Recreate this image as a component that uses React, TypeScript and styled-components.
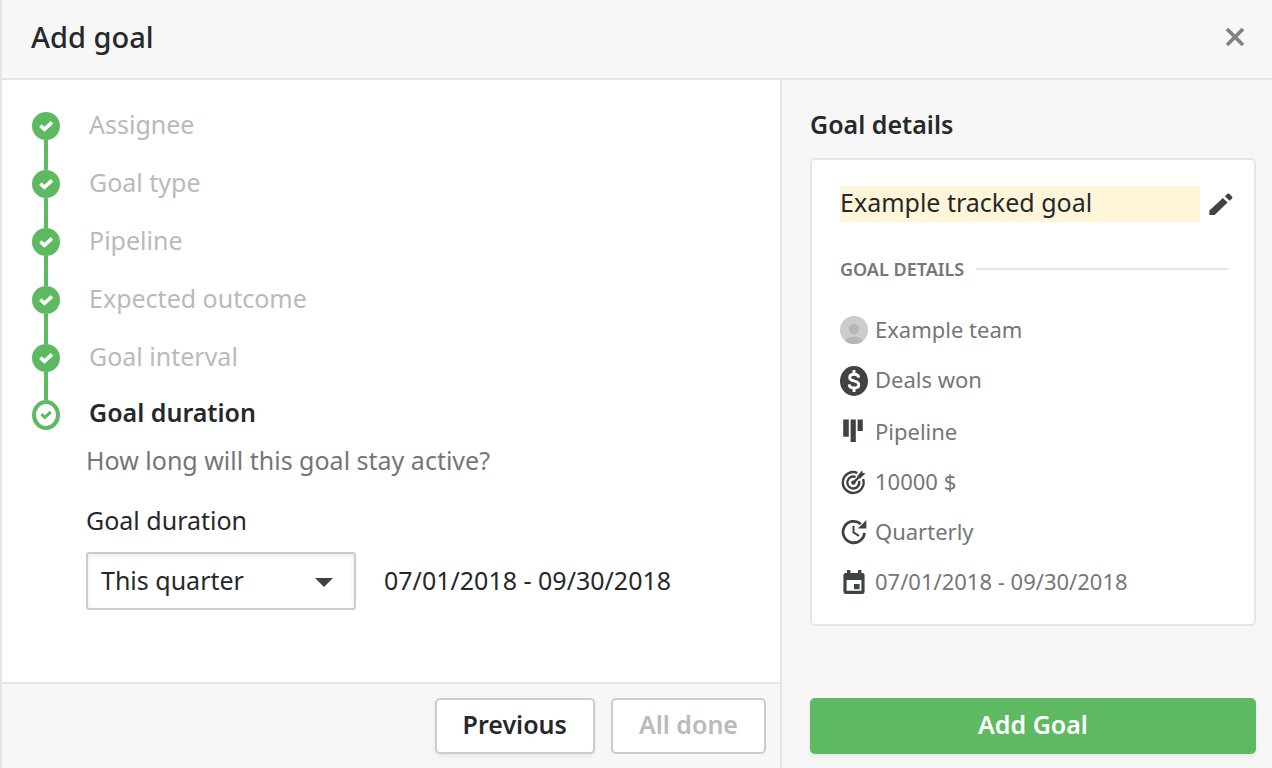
import React, { useState } from "react";
import styled, { createGlobalStyle } from "styled-components";

const color = {
  ink: "#26292c",
  icon: "#404346",
  muted: "#747678",
  faint: "#b9babb",
  green: "#5dba60",
  line: "#e5e5e5",
  control: "#cbcccd",
  panel: "#f7f7f7",
};

const GlobalStyle = createGlobalStyle`
  *, *::before, *::after { box-sizing: border-box; }
  body {
    margin: 0;
    background: #fff;
    color: ${color.ink};
    font-family: "Noto Sans", "Open Sans", sans-serif;
    font-size: 25px;
    line-height: 36px;
  }
  button, input, select { font: inherit; color: inherit; }
  h1, h2, h3, p, ol, ul { margin: 0; padding: 0; }
  svg { display: block; flex: none; }
`;

const Dialog = styled.main`
  display: flex;
  flex-direction: column;
  min-height: 100vh;
  border-left: 2px solid ${color.line};
`;

const Header = styled.header`
  display: flex;
  align-items: center;
  justify-content: space-between;
  height: 80px;
  padding: 0 20px 4px 29px;
  background: ${color.panel};
  border-bottom: 2px solid ${color.line};
`;

const Title = styled.h1`
  font-size: 29px;
  font-weight: 500;
`;

const IconButton = styled.button<{ $width: number; $outset?: number }>`
  display: flex;
  align-items: center;
  justify-content: center;
  width: ${(p) => p.$width}px;
  height: 36px;
  margin-right: -${(p) => p.$outset ?? 0}px;
  padding: 0;
  border: 0;
  background: none;
  cursor: pointer;
`;

const Body = styled.div`
  display: grid;
  grid-template-columns: minmax(0, 1fr) 492px;
  flex: 1;
`;

const Main = styled.div`
  display: flex;
  flex-direction: column;
`;

const Steps = styled.ol`
  flex: 1;
  list-style: none;
  padding: 26px 30px 24px;
`;

const Step = styled.li<{ $height?: number }>`
  display: flex;
  gap: 29px;
  height: ${(p) => (p.$height ? `${p.$height}px` : "auto")};
`;

const Rail = styled.div`
  display: flex;
  flex-direction: column;
  align-items: center;
  width: 28px;
  margin-top: 6px;
  margin-bottom: -6px;
`;

const Connector = styled.span`
  flex: 1;
  width: 4px;
  background: ${color.green};
`;

const StepLabel = styled.h2<{ $active?: boolean }>`
  font-size: 25px;
  font-weight: ${(p) => (p.$active ? 600 : 400)};
  color: ${(p) => (p.$active ? color.ink : color.faint)};
`;

const StepContent = styled.div`
  padding: 12px 0 0 54px;
`;

const Question = styled.p`
  color: ${color.muted};
`;

const FieldLabel = styled.label`
  display: block;
  margin: 24px 0 14px;
`;

const FieldRow = styled.div`
  display: flex;
  align-items: center;
  gap: 28px;
`;

const DateRange = styled.span`
  padding-bottom: 2px;
`;

const SelectBox = styled.div`
  position: relative;
  width: 270px;

  svg {
    position: absolute;
    top: 26px;
    right: 23px;
    pointer-events: none;
  }
`;

const Select = styled.select`
  appearance: none;
  width: 100%;
  height: 58px;
  padding: 0 48px 2px 13px;
  border: 2px solid ${color.control};
  border-radius: 3px;
  background: #fff;
  box-shadow: inset 0 2px 4px rgba(38, 41, 44, 0.1);
`;

const Footer = styled.footer`
  display: flex;
  justify-content: flex-end;
  gap: 16px;
  padding: 14px;
  background: ${color.panel};
  border-top: 2px solid ${color.line};
`;

const Button = styled.button<{ $primary?: boolean }>`
  height: 56px;
  padding: 0 26px 4px;
  border: 2px solid ${(p) => (p.$primary ? color.green : color.control)};
  border-radius: 5px;
  background: ${(p) => (p.$primary ? color.green : "#fff")};
  color: ${(p) => (p.$primary ? "#fff" : color.ink)};
  font-weight: 600;
  box-shadow: 0 2px 4px rgba(38, 41, 44, 0.08);
  cursor: pointer;

  &:disabled {
    color: ${color.faint};
    box-shadow: none;
    cursor: default;
  }
`;

const Aside = styled.aside`
  display: flex;
  flex-direction: column;
  padding: 26px 16px 14px 28px;
  background: ${color.panel};
  border-left: 2px solid ${color.line};
`;

const AsideTitle = styled.h2`
  font-size: 25px;
  font-weight: 600;
`;

const Card = styled.section`
  margin: 16px 0 auto;
  padding: 26px 26px 17px 28px;
  border: 2px solid ${color.line};
  border-radius: 5px;
  background: #fff;
`;

const NameRow = styled.div`
  display: flex;
`;

const NameInput = styled.input`
  flex: 1;
  min-width: 0;
  height: 36px;
  padding: 0 0 4px;
  border: 0;
  background: #fff6d9;
`;

const SectionTitle = styled.h3`
  display: flex;
  align-items: center;
  gap: 12px;
  margin: 34px 0 23px;
  font-size: 18px;
  line-height: 26px;
  font-weight: 600;
  color: ${color.muted};

  &::after {
    content: "";
    flex: 1;
    height: 2px;
    background: ${color.line};
  }
`;

const DetailList = styled.ul`
  list-style: none;
`;

const Detail = styled.li`
  display: flex;
  align-items: flex-start;
  gap: 7px;
  padding: 11px 0;
  font-size: 22px;
  line-height: 26px;
  color: ${color.muted};
`;

const DoneMark = () => (
  <svg width="28" height="28" viewBox="0 0 28 28" aria-hidden="true">
    <circle cx="14" cy="14" r="14" fill={color.green} />
    <path d="M8.4 13.6 12.4 17.4 20 10.4" fill="none" stroke="#fff" strokeWidth="3.6" />
  </svg>
);

const CurrentMark = () => (
  <svg width="28" height="30" viewBox="0 0 28 30" aria-hidden="true">
    <ellipse cx="14" cy="15" rx="12" ry="13" fill="#fff" stroke={color.green} strokeWidth="4" />
    <path d="M9.4 14.2 12.8 17.4 18.8 11.8" fill="none" stroke={color.green} strokeWidth="3" />
  </svg>
);

const CloseIcon = () => (
  <svg width="20" height="20" viewBox="0 0 20 20" aria-hidden="true">
    <path d="M2 2 18 18M18 2 2 18" stroke="#808284" strokeWidth="3.8" />
  </svg>
);

const CaretIcon = () => (
  <svg width="18" height="9" viewBox="0 0 18 9" aria-hidden="true">
    <path d="M0 0H18L9 9Z" fill={color.icon} />
  </svg>
);

const PencilIcon = () => (
  <svg width="28" height="28" viewBox="0 0 28 28" fill={color.icon} aria-hidden="true">
    <path d="M2.4 20.4 15.9 8 20.6 12.6 7.6 25H2.4Z" />
    <path d="M17.9 6.2 20.3 3.8Q21.3 3 22.3 3.8L25 6.4Q25.8 7.4 25 8.4L22.6 10.7Z" />
  </svg>
);

const AvatarIcon = () => (
  <svg width="28" height="28" viewBox="0 0 28 28" aria-hidden="true">
    <circle cx="14" cy="14" r="14" fill="#cbccce" />
    <circle cx="14" cy="13" r="5.2" fill="#b5b7b9" />
    <path d="M4.6 24.4Q8.5 20.8 14 20.8T23.4 24.4Q19.5 28 14 28T4.6 24.4Z" fill="#b5b7b9" />
  </svg>
);

const DollarIcon = () => (
  <svg width="28" height="30" viewBox="0 0 28 30" aria-hidden="true">
    <ellipse cx="14" cy="15" rx="14" ry="15" fill={color.icon} />
    <path
      d="M18.7 11.6C18.4 9.3 16.7 8.2 14.1 8.2 11.4 8.2 9.7 9.5 9.7 11.4 9.7 13.6 11.5 14.3 14.1 14.9 17.1 15.7 18.8 16.7 18.8 18.8 18.8 20.8 16.9 22 14.1 22 11.2 22 9.4 20.8 9.2 18.4M14 4V8.2M14 22V26"
      fill="none"
      stroke="#fff"
      strokeWidth="2.9"
    />
  </svg>
);

const PipelineIcon = () => (
  <svg width="28" height="28" viewBox="0 0 28 28" fill={color.icon} aria-hidden="true">
    <path d="M3.2 1.6H8.8V18.8H3.2ZM10.6 1.6H15.8V24H10.6ZM17.6 1.6H22.8V13H17.6Z" />
  </svg>
);

const TargetIcon = () => (
  <svg width="28" height="28" viewBox="0 0 28 28" aria-hidden="true">
    <g fill="none" stroke={color.icon} strokeWidth="2.4">
      <path d="M17.4 5A10.4 10.4 0 1 0 23 11" />
      <path d="M15.6 9A6 6 0 1 0 19 12.8" />
      <path d="M13.4 14.6 21 7" />
    </g>
    <circle cx="13.4" cy="14.6" r="2.2" fill={color.icon} />
    <path d="M17.3 7.9 22.2 2.2 22.6 4.9 25.6 5.3 20.2 10.5 17.5 10.3Z" fill={color.icon} />
  </svg>
);

const IntervalIcon = () => (
  <svg width="28" height="28" viewBox="0 0 28 28" aria-hidden="true">
    <g fill="none" stroke={color.icon}>
      <path d="M20.8 6A10.7 10.7 0 1 0 24.4 14.8" strokeWidth="2.8" />
      <path d="M13.5 7.8V14.4L19 17.8" strokeWidth="2" />
    </g>
    <path d="M26.4 2V10.4H17.8Z" fill={color.icon} />
  </svg>
);

const CalendarIcon = () => (
  <svg width="28" height="28" viewBox="0 0 28 28" fill={color.icon} aria-hidden="true">
    <path
      fillRule="evenodd"
      d="M7 2H10.4V5H18V2H21.4V5H22.4Q24.6 5 24.6 7.2V23.8Q24.6 26 22.4 26H5.6Q3.4 26 3.4 23.8V7.2Q3.4 5 5.6 5H7ZM6.6 12V22.8H21.4V12Z"
    />
    <path d="M14 16H19.6V21.2H14Z" />
  </svg>
);

const completedSteps = [
  { label: "Assignee", height: 58 },
  { label: "Goal type", height: 58 },
  { label: "Pipeline", height: 58 },
  { label: "Expected outcome", height: 58 },
  { label: "Goal interval", height: 56 },
];

const details = [
  { icon: <AvatarIcon />, text: "Example team" },
  { icon: <DollarIcon />, text: "Deals won" },
  { icon: <PipelineIcon />, text: "Pipeline" },
  { icon: <TargetIcon />, text: "10000 $" },
  { icon: <IntervalIcon />, text: "Quarterly" },
  { icon: <CalendarIcon />, text: "07/01/2018 - 09/30/2018" },
];

export default function App() {
  const [name, setName] = useState("Example tracked goal");

  return (
    <>
      <GlobalStyle />
      <Dialog>
        <Header>
          <Title>Add goal</Title>
          <IconButton $width={34} aria-label="Close">
            <CloseIcon />
          </IconButton>
        </Header>
        <Body>
          <Main>
            <Steps>
              {completedSteps.map((step) => (
                <Step key={step.label} $height={step.height}>
                  <Rail>
                    <DoneMark />
                    <Connector />
                  </Rail>
                  <StepLabel>{step.label}</StepLabel>
                </Step>
              ))}
              <li>
                <Step as="div">
                  <Rail>
                    <CurrentMark />
                  </Rail>
                  <StepLabel $active>Goal duration</StepLabel>
                </Step>
                <StepContent>
                  <Question>How long will this goal stay active?</Question>
                  <FieldLabel htmlFor="duration">Goal duration</FieldLabel>
                  <FieldRow>
                    <SelectBox>
                      <Select id="duration" defaultValue="This quarter">
                        <option>This quarter</option>
                      </Select>
                      <CaretIcon />
                    </SelectBox>
                    <DateRange>07/01/2018 - 09/30/2018</DateRange>
                  </FieldRow>
                </StepContent>
              </li>
            </Steps>
            <Footer>
              <Button>Previous</Button>
              <Button disabled>All done</Button>
            </Footer>
          </Main>
          <Aside>
            <AsideTitle>Goal details</AsideTitle>
            <Card>
              <NameRow>
                <NameInput
                  aria-label="Goal name"
                  value={name}
                  onChange={(e) => setName(e.target.value)}
                />
                <IconButton $width={42} $outset={14} aria-label="Edit goal name">
                  <PencilIcon />
                </IconButton>
              </NameRow>
              <SectionTitle>GOAL DETAILS</SectionTitle>
              <DetailList>
                {details.map((item) => (
                  <Detail key={item.text}>
                    {item.icon}
                    {item.text}
                  </Detail>
                ))}
              </DetailList>
            </Card>
            <Button $primary>Add Goal</Button>
          </Aside>
        </Body>
      </Dialog>
    </>
  );
}
